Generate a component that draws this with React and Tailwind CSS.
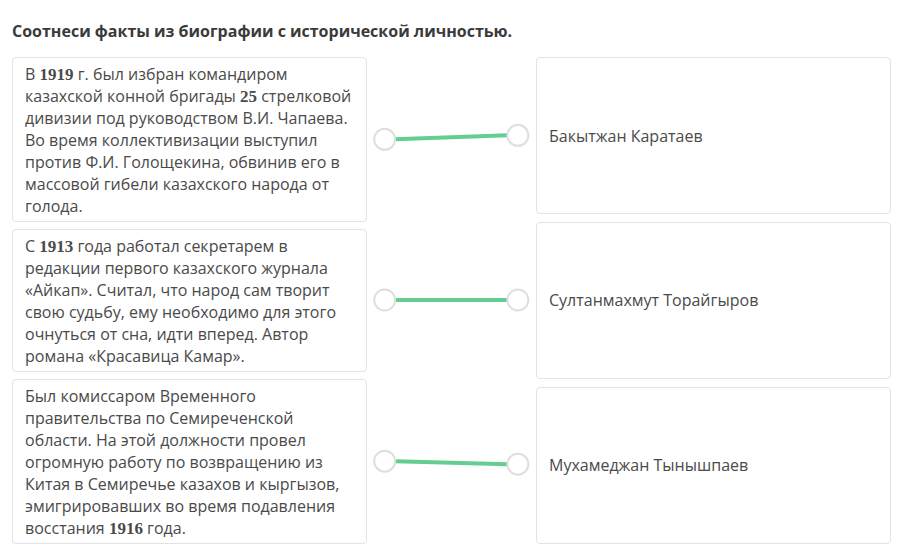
const N = ({ children }) => (
  <span className="font-['Liberation_Serif',serif] font-bold text-[17px] leading-none">{children}</span>
);

const facts = [
  <>В <N>1919</N> г. был избран командиром казахской конной бригады <N>25</N> стрелковой дивизии под руководством В.И. Чапаева. Во время коллективизации выступил против Ф.И. Голощекина, обвинив его в массовой гибели казахского народа от голода.</>,
  <>С <N>1913</N> года работал секретарем в редакции первого казахского журнала «Айкап». Считал, что народ сам творит свою судьбу, ему необходимо для этого очнуться от сна, идти вперед. Автор романа «Красавица Камар».</>,
  <>Был комиссаром Временного правительства по Семиреченской области. На этой должности провел огромную работу по возвращению из Китая в Семиречье казахов и кыргызов, эмигрировавших во время подавления восстания <N>1916</N> года.</>,
];

const names = ["Бакытжан Каратаев", "Султанмахмут Торайгыров", "Мухамеджан Тынышпаев"];

// left y, right y (relative to the columns' top)
const links = [
  [82.5, 78.5],
  [243.5, 243.5],
  [405, 408],
];

export default function App() {
  return (
    <div className="w-[909px] h-[558px] bg-white px-3 pt-[19px] font-['Open_Sans',sans-serif] text-[#4a4a4a]">
      <h1 className="text-base font-bold leading-6 text-[#3a3a3a]">
        Соотнеси факты из биографии с исторической личностью.
      </h1>

      <div className="mt-[14px] flex">
        <div className="w-[355px] flex flex-col gap-[7px]">
          {facts.map((f, i) => (
            <div key={i} className="rounded border border-[#e3e3e3] px-3 pt-[5px] pb-[4px] text-base leading-[22px]">
              {f}
            </div>
          ))}
        </div>

        <div className="w-[169px] relative">
          <svg className="absolute inset-0 w-full h-full" viewBox="0 0 169 488">
            {links.map(([ly, ry], i) => (
              <g key={i}>
                <line x1="28" y1={ly} x2="141" y2={ry} stroke="#64cd90" strokeWidth="4" />
                <circle cx="17.5" cy={ly} r="10.5" fill="white" stroke="#dedede" strokeWidth="2" />
                <circle cx="151" cy={ry} r="10.5" fill="white" stroke="#dedede" strokeWidth="2" />
              </g>
            ))}
          </svg>
        </div>

        <div className="w-[355px] flex flex-col gap-[7.5px]">
          {names.map((n) => (
            <div key={n} className="flex-1 flex items-center rounded border border-[#e3e3e3] px-3 text-base leading-[22px]">
              {n}
            </div>
          ))}
        </div>
      </div>
    </div>
  );
}
